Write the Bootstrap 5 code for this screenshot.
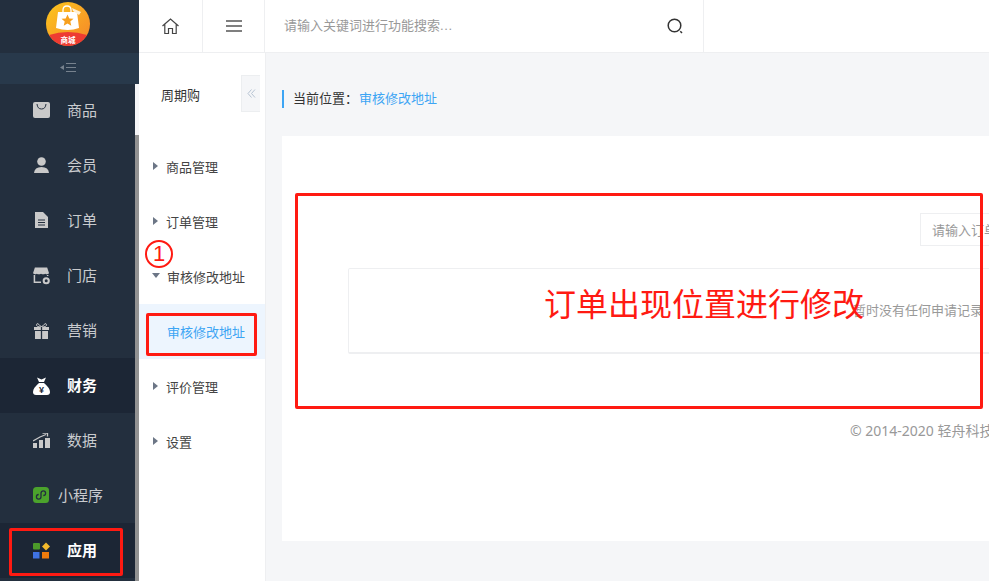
<!DOCTYPE html>
<html lang="zh">
<head>
<meta charset="utf-8">
<title>审核修改地址</title>
<link rel="stylesheet" href="https://cdn.jsdelivr.net/npm/bootstrap@5.3.0/dist/css/bootstrap.min.css">
<style>
html,body{height:100%;overflow:hidden}
body{font-family:"Liberation Sans","Noto Sans CJK SC",sans-serif;font-size:14px;color:#333;background:#f5f6f8;width:989px;height:581px;position:relative}
.shell{height:581px}
.rail-wrap{width:139px;flex:none;background:#232f3e}
.logo-cell{height:53px;width:135px;padding-top:2px}
.fold-band{height:31px;width:139px;background:#28394b;padding-bottom:2px;position:relative;z-index:1}
.fold-band svg{margin-left:-4px}
.rail-body{margin-top:-1px}
.rail{width:135px;flex:none;background:#232f3e;color:#c9cbce}
.rail-item{height:55px;padding-left:33px;gap:17px;font-size:15px}
.rail-item span{padding-top:2px}
.rail-item.is-dark{background:#1c2635;color:#fff;font-weight:700}
.rail-item.mini{gap:8px}
.rail-track{width:4px;flex:none;background:#929292}
.rail-track b{display:block;height:52px;background:#f5f5f7}
.right-side{width:850px}
.head-row{height:53px;background:#fff;border-bottom:1px solid #eeeff1}
.top-cell{height:52px;border-right:1px solid #eeeff1}
.top-home{width:64px}
.top-menu{width:62px}
.top-menu svg{margin-left:1px}
.top-search{width:439px;padding:0 19px;color:#999;font-size:13px}
.top-search svg{margin-right:1px}
.dots{letter-spacing:.6px}
.sub{width:127px;flex:none;background:#fff;border-right:1px solid #eeeff1;position:relative}
.sub-title{height:86px;padding:34px 0 0 22px;line-height:18px;font-size:13px;color:#333}
.sub-toggle{position:absolute;left:102px;top:22px;width:19px;height:37px;background:#f5f6f8;border:1px solid #eceef0;border-right:0}
.sub-item{height:55px;padding-left:14px;gap:8px;font-size:13px;color:#444}
.sub-text{padding-top:2px}
.sub-leaf{height:55px;background:#edf5fe;color:#3da5f4;font-size:13px;padding:2px 0 0 28px}
.tri-r{width:0;height:0;border-left:5px solid #6c7686;border-top:4px solid transparent;border-bottom:4px solid transparent;flex:none;margin-top:-2px}
.tri-d{width:0;height:0;border-top:5px solid #6c7686;border-left:4px solid transparent;border-right:4px solid transparent;flex:none;margin-top:-2px;margin-left:-1px;margin-right:-1px}
.body-area{width:723px;flex:none;overflow:hidden}
.crumb{margin:37px 0 0 16px;height:18px;border-left:2px solid #3da5f4;padding-left:9px;line-height:18px;font-size:13px;color:#333}
.crumb span{color:#3da5f4;margin-left:1px}
.panel{margin:28px 0 0 16px;width:800px;height:405px;background:#fff;position:relative;padding:77px 0 0 66px}
.order-input{margin-left:572px;width:160px;height:33px;border:1px solid #eeeff1;padding-left:11px;line-height:33px;font-size:13px;color:#999;white-space:nowrap}
.empty-box{margin-top:22px;width:700px;height:86px;background:#fff;border:1px solid #eeeff1;border-bottom-width:2px;border-radius:2px;color:#999;font-size:13px;padding:33px 0 0 504px;line-height:17px;white-space:nowrap}
.copy{position:absolute;left:568px;top:286px;color:#999;font-family:"Noto Sans","Noto Sans CJK SC",sans-serif;font-size:14px;line-height:18px;white-space:nowrap}
.mark-box{position:absolute;border:3px solid #ff1a12;border-radius:2px;pointer-events:none}
.mark-app{left:9px;top:528px;width:114px;height:48px}
.mark-leaf{left:146px;top:313px;width:111px;height:43px}
.mark-area{left:295px;top:193px;width:688px;height:216px}
.mark-note{position:absolute;left:544px;top:285px;color:#ff1a12;font-size:32px;line-height:40px;white-space:nowrap}
.mark-num{position:absolute;left:145px;top:240px;width:28px;height:28px;border:2px solid #ff1a12;border-radius:50%;color:#ff1a12;font-size:22px;line-height:24px;text-align:center}
</style>
</head>
<body>
<div class="d-flex shell">
  <div class="d-flex flex-column rail-wrap">
    <div class="logo-cell d-flex align-items-start justify-content-center">
      <svg width="44" height="44" viewBox="0 0 44 44">
        <defs><linearGradient id="lg" x1="0" y1="0" x2="1" y2="1"><stop offset="0" stop-color="#fcc81d"/><stop offset="1" stop-color="#f5842a"/></linearGradient></defs>
        <circle cx="22" cy="22" r="22" fill="url(#lg)"/>
        <path d="M3 33Q22 27 41 33A22 22 0 0 1 3 33Z" fill="#ee3b32"/>
        <path d="M12 10H31L33 26Q22 30 10 26Z" fill="#fff"/>
        <path d="M17 10V8Q17 4 21 4T25 8V10" stroke="#fff" stroke-width="1.300" fill="none"/>
        <path d="M26 6L35 10L33 13L27 9Z" fill="#fdf0d8"/>
        <path d="M21.500 12.500l1.800 3.900 4.200.4-3.200 2.800 1 4.200-3.800-2.200-3.800 2.200 1-4.200-3.200-2.800 4.200-.4Z" fill="#f7a01e"/>
        <text x="22" y="40.500" text-anchor="middle" font-size="7.500" font-weight="700" fill="#fff" font-family="Noto Sans CJK SC">商城</text>
      </svg>
    </div>
    <div class="fold-band d-flex align-items-center justify-content-center">
      <svg width="16" height="9" viewBox="0 0 16 9"><path d="M0 4.500l4-2.500v5Z" fill="#77828e"/><path d="M6 .5h10M6 4.500h10M6 8.500h10" stroke="#77828e" stroke-width="1.100"/></svg>
    </div>
    <div class="d-flex flex-grow-1 rail-body">
      <div class="rail">
        <div class="rail-item d-flex align-items-center">
          <svg width="17" height="17" viewBox="0 0 17 17"><rect width="17" height="16" rx="2" fill="#c9c9c9"/><path d="M4 2Q4.500 7 8.500 7T13 2" stroke="#232f3e" fill="none" stroke-width="1"/></svg><span>商品</span>
        </div>
        <div class="rail-item d-flex align-items-center">
          <svg width="17" height="17" viewBox="0 0 17 17"><circle cx="8.500" cy="4.500" r="4.300" fill="#c9c9c9"/><path d="M1 16Q1.500 10 8.500 10T16 16Z" fill="#c9c9c9"/></svg><span>会员</span>
        </div>
        <div class="rail-item d-flex align-items-center">
          <svg width="17" height="17" viewBox="0 0 17 17"><path d="M2 0H10L15 5V16H2Z" fill="#c9c9c9"/><path d="M5 8H12M5 10.500H12M5 13H12" stroke="#232f3e"/></svg><span>订单</span>
        </div>
        <div class="rail-item d-flex align-items-center">
          <svg width="17" height="18" viewBox="0 0 18 18"><path d="M2 0H15L17 6Q15 8 13 6.500Q10.500 8 8.500 6.500Q6 8 4 6.500Q2 8 0 6Z" fill="#c9c9c9"/><path d="M1.500 8V15.500H8.500M15.500 8V9" stroke="#c9c9c9" stroke-width="1.600" fill="none"/><circle cx="14" cy="14" r="2.700" fill="none" stroke="#c9c9c9" stroke-width="2.200"/></svg><span>门店</span>
        </div>
        <div class="rail-item d-flex align-items-center">
          <svg width="17" height="17" viewBox="0 0 17 17"><path d="M1 5H16V8H1ZM2 9H15V17H2Z" fill="#c9c9c9"/><path d="M8.500 5Q4 0 3.500 2.500T8.500 5Q13 0 13.500 2.500T8.500 5" stroke="#c9c9c9" fill="none"/><path d="M8.500 5V17" stroke="#232f3e" stroke-width="1.300"/></svg><span>营销</span>
        </div>
        <div class="rail-item is-dark d-flex align-items-center">
          <svg width="17" height="18" viewBox="0 0 17 18"><path d="M4 .5L8.500 2.500L13 .5L11 5H6Z" fill="#fff"/><path d="M6 6H11Q17 11 17 15Q17 18 14 18H3Q0 18 0 15Q0 11 6 6Z" fill="#fff"/><text x="8.500" y="15.500" font-size="9" text-anchor="middle" fill="#1c2635" font-family="Liberation Sans">¥</text></svg><span>财务</span>
        </div>
        <div class="rail-item d-flex align-items-center">
          <svg width="17" height="15" viewBox="0 0 17 15"><path d="M0 10H4V15H0ZM6 7H10V15H6ZM12 5H17V15H12Z" fill="#c9c9c9"/><path d="M0 8L7 4L13 1.500M9.500 0H14.500V3.500" stroke="#c9c9c9" fill="none" stroke-width="1.300"/></svg><span>数据</span>
        </div>
        <div class="rail-item mini d-flex align-items-center">
          <svg width="17" height="17" viewBox="0 0 17 17"><rect width="16" height="16" rx="3.500" fill="#4ba32c"/><path d="M5.700 7.500A2.300 2.300 0 1 0 8 9.800V6.200A2.300 2.300 0 1 1 10.300 8.500" stroke="#232f3e" stroke-width="1.300" fill="none"/></svg><span>小程序</span>
        </div>
        <div class="rail-item is-dark d-flex align-items-center">
          <svg width="17" height="17" viewBox="0 0 17 17"><rect x="0" y="1" width="7" height="6.500" rx="1" fill="#4c9a2a"/><path d="M13 .5L17 4.500L13 8.500L9 4.500Z" fill="#f3b92c"/><rect x="0" y="10" width="6.500" height="6.500" fill="#3f73e3"/><rect x="9" y="10" width="7" height="6.500" fill="#ef7b0c"/></svg><span>应用</span>
        </div>
      </div>
      <div class="rail-track"><b></b></div>
    </div>
  </div>
  <div class="d-flex flex-column flex-grow-1 right-side">
    <div class="d-flex head-row">
      <div class="top-cell top-home d-flex align-items-center justify-content-center">
        <svg width="17" height="17" viewBox="0 0 17 17"><path d="M.5 8L8.500 1L16.500 8M2.800 6.500V15.500H6.500V10.500H10.500V15.500H14.200V6.500" fill="none" stroke="#444" stroke-width="1.200"/></svg>
      </div>
      <div class="top-cell top-menu d-flex align-items-center justify-content-center">
        <svg width="16" height="12" viewBox="0 0 16 12"><path d="M0 1H16M0 6H16M0 11H16" stroke="#555" stroke-width="1.300"/></svg>
      </div>
      <div class="top-cell top-search d-flex align-items-center justify-content-between">
        <span>请输入关键词进行功能搜索<span class="dots">...</span></span>
        <svg width="16" height="16" viewBox="0 0 16 16"><circle cx="7.500" cy="7.500" r="6.300" fill="none" stroke="#333" stroke-width="1.500"/><path d="M13.300 13.300L15 15" stroke="#333" stroke-width="1.500"/></svg>
      </div>
    </div>
    <div class="d-flex flex-grow-1">
      <div class="sub">
        <div class="sub-title">周期购</div>
        <div class="sub-toggle d-flex align-items-center justify-content-center">
          <svg width="9" height="9" viewBox="0 0 9 9"><path d="M4.500.5L1 4.500L4.500 8.500M8 .5L4.500 4.500L8 8.500" stroke="#b6c3d2" fill="none"/></svg>
        </div>
        <div class="sub-item d-flex align-items-center"><span class="tri-r"></span><span class="sub-text">商品管理</span></div>
        <div class="sub-item d-flex align-items-center"><span class="tri-r"></span><span class="sub-text">订单管理</span></div>
        <div class="sub-item d-flex align-items-center"><span class="tri-d"></span><span class="sub-text">审核修改地址</span></div>
        <div class="sub-leaf d-flex align-items-center">审核修改地址</div>
        <div class="sub-item d-flex align-items-center"><span class="tri-r"></span><span class="sub-text">评价管理</span></div>
        <div class="sub-item d-flex align-items-center"><span class="tri-r"></span><span class="sub-text">设置</span></div>
      </div>
      <div class="body-area">
        <div class="crumb">当前位置：<span>审核修改地址</span></div>
        <div class="panel">
          <div class="order-input">请输入订单号</div>
          <div class="empty-box">暂时没有任何申请记录</div>
          <div class="copy">© 2014-2020 轻舟科技</div>
        </div>
      </div>
    </div>
  </div>
</div>
<div class="mark-box mark-app"></div>
<div class="mark-box mark-leaf"></div>
<div class="mark-box mark-area"></div>
<div class="mark-note">订单出现位置进行修改</div>
<div class="mark-num">1</div>
</body>
</html>
